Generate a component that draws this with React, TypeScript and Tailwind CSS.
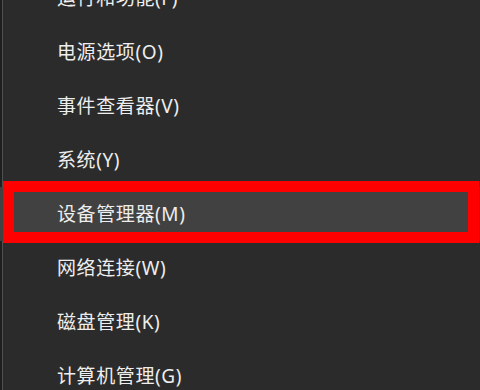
import React from "react";

const items = [
  { label: "运行和功能(F)", active: false },
  { label: "电源选项(O)", active: false },
  { label: "事件查看器(V)", active: false },
  { label: "系统(Y)", active: false },
  { label: "设备管理器(M)", active: true },
  { label: "网络连接(W)", active: false },
  { label: "磁盘管理(K)", active: false },
  { label: "计算机管理(G)", active: false },
];

export default function App() {
  return (
    <div
      className="w-[480px] h-[390px] overflow-hidden bg-[#2b2b2b] flex"
      style={{ fontFamily: "'Noto Sans', 'Noto Sans CJK SC', sans-serif" }}
    >
      <div className="w-[2px] bg-[#1f1f1f]" />
      <div className="w-[1px] bg-[#505050]" />
      <div className="flex-1 flex flex-col -mt-[29px] -ml-[3px]">
        {items.map((it) => (
          <div
            key={it.label}
            className={
              it.active
                ? "relative h-[54px] shrink-0 flex items-center pl-[57px] bg-[#414141] text-[19px] tracking-[0.6px] text-[#eeeeee]"
                : "relative h-[54px] shrink-0 flex items-center pl-[57px] text-[19px] tracking-[0.6px] text-[#eeeeee]"
            }
          >
            <span className="leading-none">{it.label}</span>
            {it.active && (
              <span className="absolute top-[-6px] bottom-[-2px] left-[3px] right-[1px] border-[11px] border-[#ff0000] z-10" />
            )}
          </div>
        ))}
      </div>
    </div>
  );
}
